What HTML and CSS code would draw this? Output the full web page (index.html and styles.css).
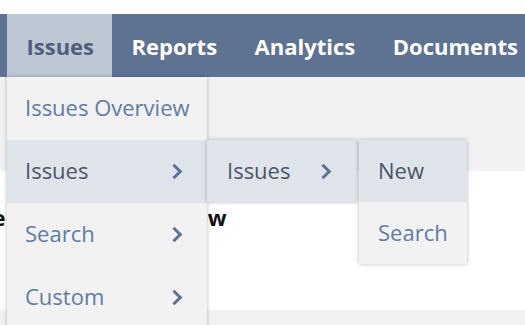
FILE: index.html
```html
<!DOCTYPE html>
<html lang="en">
<head>
    <meta charset="UTF-8">
    <meta name="viewport" content="width=device-width, initial-scale=1.0">
    <title>Issues</title>
    <link rel="stylesheet" href="styles.css">
</head>
<body>
    <div class="top-strip"></div>
    <nav class="navbar">
        <div class="nav-item active">
            <span class="nav-label">Issues</span>
            <ul class="menu">
                <li><a href="#">Issues Overview</a></li>
                <li class="has-sub open">
                    <a href="#">Issues <span class="chev"></span></a>
                    <ul class="menu sub">
                        <li class="has-sub open">
                            <a href="#">Issues <span class="chev"></span></a>
                            <ul class="menu sub sub-last">
                                <li class="hover"><a href="#">New</a></li>
                                <li><a href="#">Search</a></li>
                            </ul>
                        </li>
                    </ul>
                </li>
                <li class="has-sub"><a href="#">Search <span class="chev"></span></a></li>
                <li class="has-sub"><a href="#">Custom <span class="chev"></span></a></li>
            </ul>
        </div>
        <div class="nav-item"><span class="nav-label">Reports</span></div>
        <div class="nav-item"><span class="nav-label">Analytics</span></div>
        <div class="nav-item"><span class="nav-label">Documents</span></div>
    </nav>
    <div class="toolbar"></div>
    <main class="content">
        <h2 class="page-title">Issue Summary Overview</h2>
        <a class="page-link" href="#">Show all issues:</a>
    </main>
    <div class="footer"></div>
</body>
</html>
```

FILE: styles.css
```css
body {
    margin: 0;
    font-family: "Open Sans", Arial, sans-serif;
    background-color: #fff;
    overflow: hidden;
}
.top-strip {
    height: 14px;
}
.navbar {
    display: flex;
    height: 63px;
    padding-left: 7px;
    background-color: #5e7292;
    white-space: nowrap;
}
.nav-item {
    position: relative;
    display: flex;
    align-items: center;
    padding: 0 18px 0 19.5px;
    color: #fff;
    font-size: 22px;
    font-weight: bold;
}
.nav-item.active {
    background-color: #bec8d5;
    color: #505f79;
}
.toolbar {
    height: 94px;
    background-color: #f1f2f4;
}
.content {
    height: 139px;
    padding-top: 31px;
    box-sizing: border-box;
    white-space: nowrap;
}
.page-title {
    margin: 0 0 0 -51px;
    font-size: 22px;
    line-height: 30px;
    font-weight: bold;
    color: #111;
}
.page-link {
    display: block;
    margin-top: 21px;
    margin-left: -134px;
    font-size: 18px;
    color: #1a6ed0;
    text-decoration: none;
}
.footer {
    height: 20px;
    background-color: #f1f2f4;
}

/* dropdown menus */
.menu {
    position: absolute;
    top: 100%;
    left: 0;
    width: 200px;
    margin: 0;
    padding: 0;
    list-style: none;
    background-color: #f2f2f2;
    box-shadow: 0 0 4px rgba(0,0,0,0.28);
    font-weight: normal;
    font-size: 22px;
    z-index: 10;
}
.menu li {
    position: relative;
}
.menu a {
    display: flex;
    align-items: center;
    justify-content: space-between;
    box-sizing: border-box;
    height: 63px;
    padding: 0 24px 3px 18px;
    color: #5f7ca3;
    text-decoration: none;
}
.menu li.open > a, .menu li.hover > a {
    background-color: #dfe4ea;
    color: #4c5568;
}
.menu.sub {
    top: 0;
    left: 100%;
    width: 150px;
}
.menu.sub a {
    height: 62px;
    padding: 0 25px 3px 20px;
}
.menu.sub-last {
    left: calc(100% + 2px);
    width: 108px;
}
.menu.sub-last a {
    padding: 0 10px 3px 19px;
}
.chev {
    width: 8px;
    height: 8px;
    border-top: 3px solid #5b7296;
    border-right: 3px solid #5b7296;
    transform: rotate(45deg);
    margin: 3px 3px 0 0;
}
```
